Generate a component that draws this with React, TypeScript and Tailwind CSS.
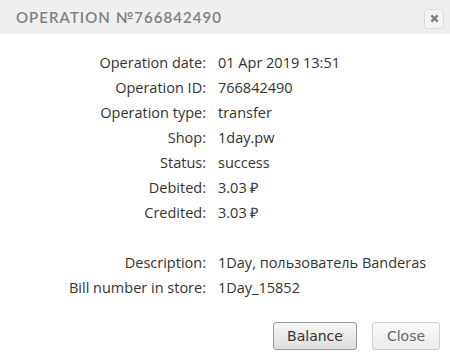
const rows: [string, string][] = [
  ["Operation date:", "01 Apr 2019 13:51"],
  ["Operation ID:", "766842490"],
  ["Operation type:", "transfer"],
  ["Shop:", "1day.pw"],
  ["Status:", "success"],
  ["Debited:", "3.03 ₽"],
  ["Credited:", "3.03 ₽"],
  ["", ""],
  ["Description:", "1Day, пользователь Banderas"],
  ["Bill number in store:", "1Day_15852"],
];

export default function App() {
  return (
    <div className="w-[450px] h-[360px] bg-white flex flex-col font-['Lato','Open_Sans',sans-serif]">
      <div className="h-[34px] bg-[#efefef] flex items-center justify-between pl-4 pr-[6px] shrink-0">
        <span className="text-[15px] tracking-[0.07em] text-[#808080] uppercase font-semibold">
          Operation №766842490
        </span>
        <button className="w-5 h-5 mt-[3px] rounded-[3px] border border-[#dcdcdc] bg-[#f4f4f4] flex items-center justify-center">
          <svg width="9" height="9" viewBox="0 0 10 10">
            <path d="M1.5 1.5 L8.5 8.5 M8.5 1.5 L1.5 8.5" stroke="#808080" strokeWidth="2.6" />
          </svg>
        </button>
      </div>
      <div className="flex flex-col pt-[16px] font-['Open_Sans',sans-serif]">
        {rows.map(([label, value], i) => (
          <div key={i} className="flex h-[25px] items-center text-[14.5px] text-[#333]">
            <div className="w-[206px] text-right">{label}</div>
            <div className="pl-[12px]">{value}</div>
          </div>
        ))}
      </div>
      <div className="flex justify-end gap-[15px] pr-[10px] mt-[22px] font-['DejaVu_Sans',sans-serif]">
        <button className="w-[84px] h-[28px] rounded-[3px] border border-[#999] bg-gradient-to-b from-[#f6f6f6] to-[#dedede] text-[14px] text-[#333]">
          Balance
        </button>
        <button className="w-[68px] h-[28px] rounded-[3px] border border-[#cfcfcf] bg-gradient-to-b from-[#fafafa] to-[#ececec] text-[14px] text-[#666]">
          Close
        </button>
      </div>
    </div>
  );
}
